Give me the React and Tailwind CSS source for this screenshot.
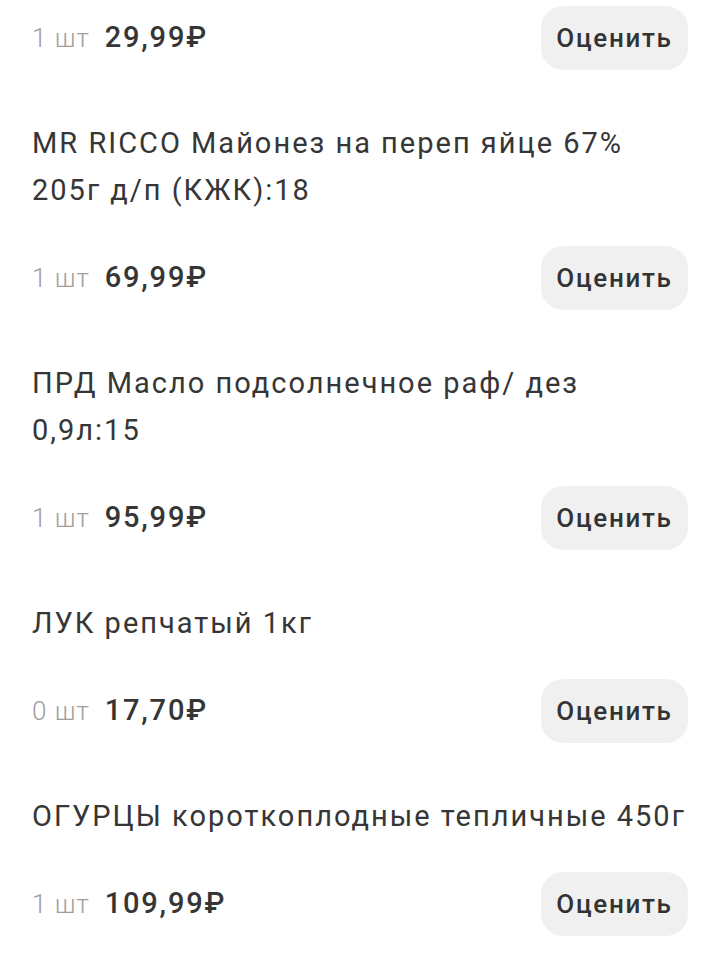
const items = [
  { title: null, qty: "1 шт", price: "29,99₽" },
  { title: "MR RICCO Майонез на переп яйце 67% 205г д/п (КЖК):18", qty: "1 шт", price: "69,99₽" },
  { title: "ПРД Масло подсолнечное раф/ дез 0,9л:15", qty: "1 шт", price: "95,99₽" },
  { title: "ЛУК репчатый 1кг", qty: "0 шт", price: "17,70₽" },
  { title: "ОГУРЦЫ короткоплодные тепличные 450г", qty: "1 шт", price: "109,99₽" },
];

function Item({ title, qty, price, first }) {
  return (
    <div className={first ? "pt-[6px]" : "pt-[50px]"}>
      {title && (
        <p className="text-[29px] leading-[47px] tracking-[2px] text-[#363636] mb-[32px]">{title}</p>
      )}
      <div className="flex items-center justify-between h-[64px]">
        <div className="flex items-baseline gap-[15px]">
          <span className="text-[26px] font-light tracking-[1px] text-[#9e9e9e]">{qty}</span>
          <span className="text-[29px] font-medium tracking-[1.8px] text-[#363636]">{price}</span>
        </div>
        <button className="h-[64px] w-[147px] rounded-[22px] bg-[#f0f0f0] text-[26px] font-medium tracking-[1.7px] text-[#333333]">
          Оценить
        </button>
      </div>
    </div>
  );
}

export default function App() {
  return (
    <div className="min-h-screen bg-white pl-[32px] pr-[30px]" style={{ fontFamily: "Roboto, 'Noto Sans', sans-serif" }}>
      {items.map((it, i) => (
        <Item key={i} {...it} first={i === 0} />
      ))}
    </div>
  );
}
